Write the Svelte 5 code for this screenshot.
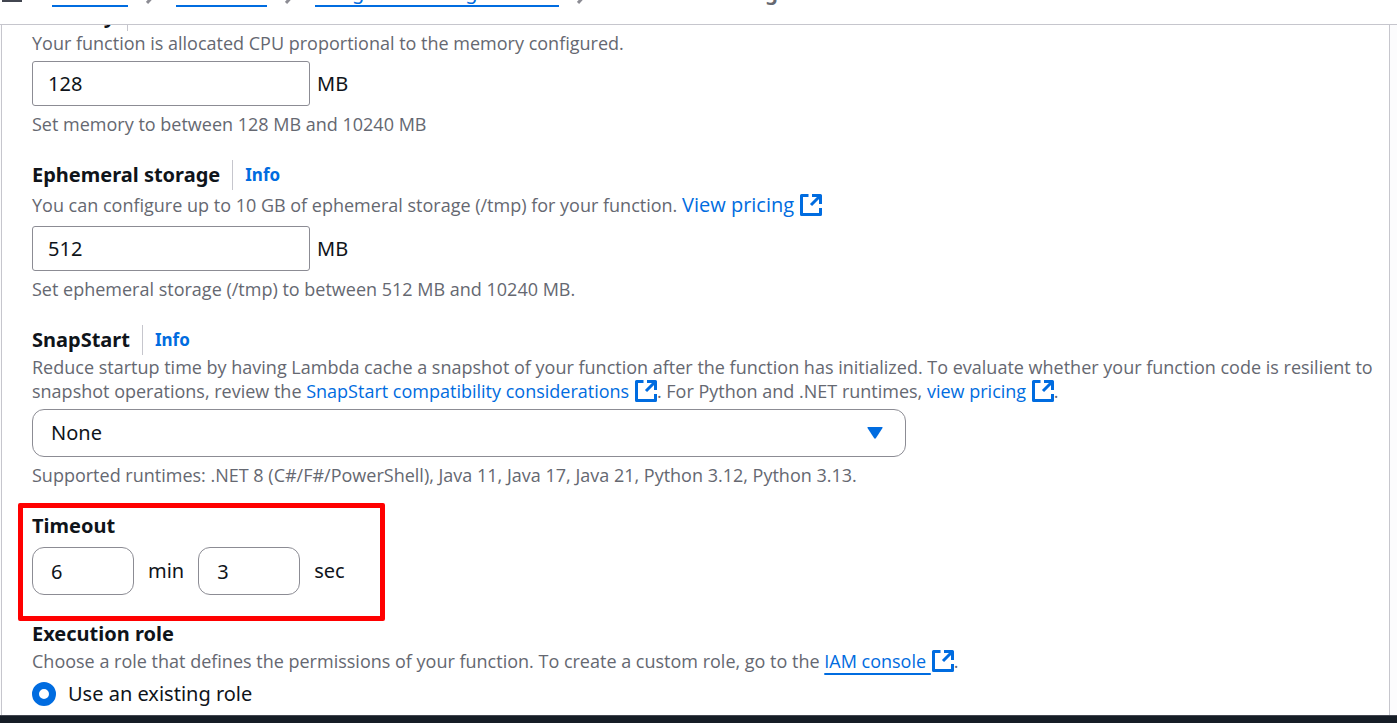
<script>
  let memory = $state('128');
  let storage = $state('512');
  let snapStart = $state('None');
  let minutes = $state('6');
  let seconds = $state('3');
  let role = $state('existing');
</script>

{#snippet external()}
  <svg class="external" viewBox="0 0 22 22" aria-hidden="true">
    <path d="M8.5 1.5h-7v19h19V14" />
    <path d="M12 1.5h8.500v8.500M20 2l-9 9" />
  </svg>
{/snippet}

{#snippet chevron()}
  <svg class="chevron" viewBox="0 0 12 24" aria-hidden="true"><path d="M1 2l9 10-9 10" /></svg>
{/snippet}

<div class="page">
  <header>
    <button class="menu" aria-label="Open navigation"><i></i><i></i><i></i></button>
    <nav aria-label="Breadcrumbs">
      <a href="#lambda">Lambda</a>
      {@render chevron()}
      <a href="#functions">Functions</a>
      {@render chevron()}
      <a href="#function">ImageProcessingFunction</a>
      {@render chevron()}
      <span>Edit basic settings</span>
    </nav>
  </header>

  <main>
    <form class="card">
      <section>
        <div class="heading"><label for="memory">Memory</label><a class="info" href="#memory-info">Info</a></div>
        <p>Your function is allocated CPU proportional to the memory configured.</p>
        <div class="control"><input class="size" id="memory" bind:value={memory} />MB</div>
        <p>Set memory to between 128 MB and 10240 MB</p>
      </section>

      <section>
        <div class="heading"><label for="storage">Ephemeral storage</label><a class="info" href="#storage-info">Info</a></div>
        <p class="tall">You can configure up to 10 GB of ephemeral storage (/tmp) for your function. <a class="large" href="#pricing">View pricing {@render external()}</a></p>
        <div class="control"><input class="size" id="storage" bind:value={storage} />MB</div>
        <p>Set ephemeral storage (/tmp) to between 512 MB and 10240 MB.</p>
      </section>

      <section>
        <div class="heading"><label for="snapstart">SnapStart</label><a class="info" href="#snapstart-info">Info</a></div>
        <p>Reduce startup time by having Lambda cache a snapshot of your function after the function has initialized. To evaluate whether your function code is resilient to snapshot operations, review the <a href="#compatibility">SnapStart compatibility considerations {@render external()}</a>. For Python and .NET runtimes, <a href="#snapstart-pricing">view pricing {@render external()}</a>.</p>
        <div class="control select">
          <select id="snapstart" bind:value={snapStart}>
            <option>None</option>
            <option>PublishedVersions</option>
          </select>
          <svg class="caret" viewBox="0 0 16 12" aria-hidden="true"><path d="M1 0h14q1 0 .5 1L9 11q-1 1.500-2 0L.5 1Q0 0 1 0z" /></svg>
        </div>
        <p>Supported runtimes: .NET 8 (C#/F#/PowerShell), Java 11, Java 17, Java 21, Python 3.12, Python 3.13.</p>
      </section>

      <section class="timeout">
        <div class="heading"><span id="timeout">Timeout</span></div>
        <div class="control times" role="group" aria-labelledby="timeout">
          <input id="minutes" bind:value={minutes} /><label for="minutes">min</label>
          <input id="seconds" bind:value={seconds} /><label for="seconds">sec</label>
        </div>
      </section>

      <section>
        <div class="heading"><span>Execution role</span></div>
        <p>Choose a role that defines the permissions of your function. To create a custom role, go to the <a class="underlined" href="#iam">IAM console {@render external()}</a>.</p>
        <label class="control radio"><input type="radio" name="role" value="existing" bind:group={role} />Use an existing role</label>
      </section>
    </form>
  </main>
  <footer></footer>
</div>

<style>
  :global(body) { margin: 0; }
  .page {
    height: 100vh;
    display: flex;
    flex-direction: column;
    overflow: hidden;
    background: #fff;
    color: #0f141a;
    font: 20px/30px "Noto Sans", "Open Sans", sans-serif;
  }
  a { color: #006ce0; text-decoration: none; }
  header {
    flex: none;
    height: 24px;
    border-bottom: 1px solid #c6c6cd;
    overflow: hidden;
  }
  header, nav { display: flex; align-items: center; }
  nav { gap: 18px; margin-top: -38px; }
  nav a { line-height: 26px; border-bottom: 2px solid; }
  nav span { color: #656871; font-weight: 700; }
  .chevron { width: 12px; height: 24px; fill: none; stroke: #8c8c94; stroke-width: 3; }
  .menu {
    display: grid;
    gap: 5px;
    width: 20px;
    margin: -39px 30px 0 2px;
    padding: 0;
    border: 0;
    background: none;
  }
  .menu i { height: 3px; background: #424650; }
  main { flex: 1; min-height: 0; overflow: hidden; background: #fcfcfd; }
  .card {
    display: flex;
    flex-direction: column;
    gap: 24px;
    margin: -24px 7px 0 1px;
    padding: 0 12px 32px 30px;
    border: solid #c6c6cd;
    border-width: 0 1px;
    background: #fff;
  }
  .heading { display: flex; align-items: center; font-weight: 700; }
  .info {
    margin-left: 12px;
    padding-left: 12px;
    border-left: 1px solid #c6c6cd;
    font-size: 17px;
  }
  p { margin: 0; color: #656871; font-family: "Open Sans", "Noto Sans", sans-serif; font-size: 18px; line-height: 24px; }
  .tall { height: 30px; line-height: 30px; }
  .large { font-size: 20px; }
  .underlined { text-decoration: underline 2px; text-underline-offset: 5px; }
  .external {
    width: 22px;
    height: 22px;
    margin: -6px 0 -2px 1px;
    vertical-align: middle;
    fill: none;
    stroke: currentColor;
    stroke-width: 3;
    stroke-linejoin: round;
  }
  .control { display: flex; align-items: center; gap: 7px; margin: 6px 0; }
  input, select {
    box-sizing: border-box;
    margin: 0;
    border: 1px solid #8c8c94;
    background: #fff;
    color: inherit;
    font: inherit;
  }
  .size { width: 21%; max-width: 278px; height: 45px; padding: 0 15px; border-radius: 3px; }
  .select { position: relative; width: 65%; }
  select { width: 100%; height: 48px; padding: 0 18px; border-radius: 12px; appearance: none; }
  .caret { position: absolute; right: 23px; width: 16px; height: 12px; fill: #006ce0; pointer-events: none; }
  .timeout { position: relative; }
  .timeout .control { margin-bottom: 0; }
  .timeout::after {
    content: "";
    position: absolute;
    inset: -8px auto -26px -14px;
    box-sizing: border-box;
    width: 367px;
    border: 5px solid #f00;
    border-radius: 2px;
    pointer-events: none;
  }
  .times { gap: 14px; }
  .times input { width: 102px; height: 48px; padding: 0 18px; border-radius: 12px; }
  .radio { gap: 12px; }
  .radio input { width: 24px; height: 24px; border: 7px solid #006ce0; border-radius: 50%; appearance: none; }
  footer { flex: none; height: 7px; border-top: 1px solid #424650; background: #161d26; }
</style>
